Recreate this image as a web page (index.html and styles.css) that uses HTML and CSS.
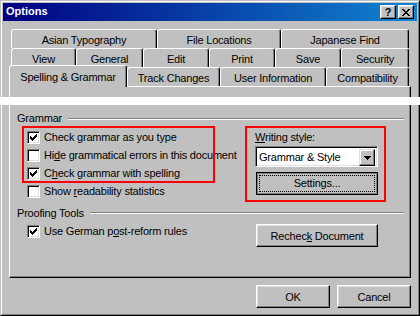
FILE: index.html
```html
<!DOCTYPE html>
<html lang="en">
<head>
    <meta charset="UTF-8">
    <title>Options</title>
    <link rel="stylesheet" href="styles.css">
</head>
<body>
    <div class="window window-top">
        <div class="frame">
            <div class="titlebar">
                <span class="title">Options</span>
                <div class="title-buttons">
                    <span class="tbtn help">?</span>
                    <span class="tbtn close">
                        <svg width="8" height="7" viewBox="0 0 8 7" shape-rendering="crispEdges"><path d="M0 0h2v1H0z M6 0h2v1H6z M1 1h2v1H1z M5 1h2v1H5z M2 2h4v1H2z M3 3h2v1H3z M2 4h4v1H2z M1 5h2v1H1z M5 5h2v1H5z M0 6h2v1H0z M6 6h2v1H6z"/></svg>
                    </span>
                </div>
            </div>

            <div class="tabs">
                <div class="tab-row">
                    <div class="tab tab-asian">Asian Typography</div>
                    <div class="tab tab-files">File Locations</div>
                    <div class="tab tab-find">Japanese Find</div>
                </div>
                <div class="tab-row">
                    <div class="tab tab-view">View</div>
                    <div class="tab tab-general">General</div>
                    <div class="tab tab-edit">Edit</div>
                    <div class="tab tab-print">Print</div>
                    <div class="tab tab-save">Save</div>
                    <div class="tab tab-security">Security</div>
                </div>
                <div class="tab-row front">
                    <div class="tab tab-spelling active">Spelling &amp; Grammar</div>
                    <div class="tab tab-track">Track Changes</div>
                    <div class="tab tab-user">User Information</div>
                    <div class="tab tab-compat">Compatibility</div>
                </div>
            </div>
            <div class="panel panel-top"></div>
        </div>
    </div>

    <div class="window window-bottom">
        <div class="frame">
            <div class="panel panel-bottom">
                <div class="group-head">
                    <span>Grammar</span>
                    <div class="rule"></div>
                </div>

                <div class="grammar">
                    <div class="grammar-left">
                        <div class="mark checks">
                            <div class="check">
                                <span class="box"><svg width="7" height="7" viewBox="0 0 7 7" shape-rendering="crispEdges"><path d="M6 0h1v1H6z M5 1h2v1H5z M0 2h1v1H0z M4 2h3v1H4z M0 3h2v1H0z M3 3h3v1H3z M0 4h5v1H0z M1 5h3v1H1z M2 6h1v1H2z"/></svg></span>
                                <span>Check <u>g</u>rammar as you type</span>
                            </div>
                            <div class="check">
                                <span class="box"></span>
                                <span>Hi<u>d</u>e grammatical errors in this document</span>
                            </div>
                            <div class="check">
                                <span class="box"><svg width="7" height="7" viewBox="0 0 7 7" shape-rendering="crispEdges"><path d="M6 0h1v1H6z M5 1h2v1H5z M0 2h1v1H0z M4 2h3v1H4z M0 3h2v1H0z M3 3h3v1H3z M0 4h5v1H0z M1 5h3v1H1z M2 6h1v1H2z"/></svg></span>
                                <span>C<u>h</u>eck grammar with spelling</span>
                            </div>
                        </div>
                        <div class="check single">
                            <span class="box"></span>
                            <span>Show <u>r</u>eadability statistics</span>
                        </div>
                    </div>

                    <div class="mark grammar-right">
                        <div class="field-label"><u>W</u>riting style:</div>
                        <div class="combo">
                            <span class="combo-text">Grammar &amp; Style</span>
                            <span class="combo-btn">
                                <svg width="7" height="4" viewBox="0 0 7 4" shape-rendering="crispEdges"><path d="M0 0h7v1H0z M1 1h5v1H1z M2 2h3v1H2z M3 3h1v1H3z"/></svg>
                            </span>
                        </div>
                        <button class="btn btn-default settings"><span class="focus">Settings...</span></button>
                    </div>
                </div>

                <div class="group-head proofing-head">
                    <span>Proofing Tools</span>
                    <div class="rule"></div>
                </div>

                <div class="proofing">
                    <div class="proofing-left">
                        <div class="check single">
                            <span class="box"><svg width="7" height="7" viewBox="0 0 7 7" shape-rendering="crispEdges"><path d="M6 0h1v1H6z M5 1h2v1H5z M0 2h1v1H0z M4 2h3v1H4z M0 3h2v1H0z M3 3h3v1H3z M0 4h5v1H0z M1 5h3v1H1z M2 6h1v1H2z"/></svg></span>
                            <span>Use German p<u>o</u>st-reform rules</span>
                        </div>
                    </div>
                    <button class="btn recheck">Rechec<u>k</u> Document</button>
                </div>
            </div>

            <div class="actions">
                <button class="btn">OK</button>
                <button class="btn">Cancel</button>
            </div>
        </div>
    </div>
</body>
</html>
```

FILE: styles.css
```css
body {
    margin: 0;
    background: #fff;
    font-family: "Liberation Sans", Arial, sans-serif;
    font-size: 11px;
    letter-spacing: -0.2px;
    color: #000;
}

u {
    text-underline-offset: 1px;
    text-decoration-thickness: 1px;
}

/* window frame, cut in two parts */
.window {
    width: 420px;
    box-sizing: border-box;
    background: #c0c0c0;
    border: 1px solid;
    border-color: #c0c0c0 #000 #000 #c0c0c0;
}
.window-top {
    height: 97px;
    border-bottom: none;
}
.window-bottom {
    height: 211px;
    margin-top: 8px;
    border-top: none;
}
.frame {
    height: 100%;
    box-sizing: border-box;
    border: 1px solid;
    border-color: #fff #808080 #808080 #fff;
    padding: 1px;
}
.window-top .frame {
    border-bottom: none;
    padding-bottom: 0;
}
.window-bottom .frame {
    border-top: none;
    padding-top: 0;
}

/* title bar */
.titlebar {
    height: 18px;
    display: flex;
    justify-content: space-between;
    padding: 0 3px 0 3px;
    background: linear-gradient(to right, #000080, #1084d0);
}
.title {
    color: #fff;
    font-weight: bold;
    letter-spacing: 0;
    line-height: 13px;
    padding-top: 2px;
}
.title-buttons {
    display: flex;
    gap: 2px;
    padding-top: 2px;
}
.tbtn {
    width: 16px;
    height: 14px;
    box-sizing: border-box;
    display: flex;
    align-items: center;
    justify-content: center;
    background: #c0c0c0;
    border: 1px solid;
    border-color: #fff #000 #000 #fff;
    box-shadow: inset -1px -1px #808080, inset 1px 1px #dfdfdf;
}
.help {
    font-weight: bold;
    line-height: 12px;
}
.tbtn svg {
    display: block;
}

/* tabs */
.tabs {
    margin-top: 8px;
    padding-left: 8px;
}
.tab-row {
    display: flex;
    height: 19px;
    align-items: flex-start;
}
.tab-row.front {
    margin-left: -2px;
}
.tab {
    box-sizing: border-box;
    height: 19px;
    background: #c0c0c0;
    border: 1px solid;
    border-bottom: none;
    border-color: #fff #000 transparent #fff;
    border-radius: 3px 3px 0 0;
    box-shadow: inset -1px 0 #808080;
    text-align: center;
    padding-top: 4px;
    line-height: 13px;
    white-space: nowrap;
}
.tab.active {
    height: 22px;
    margin-top: -2px;
    padding-top: 5px;
    position: relative;
    z-index: 1;
}
.tab-asian { width: 146px; }
.tab-files { width: 124px; }
.tab-find { width: 128px; }
.tab-view { width: 65px; }
.tab-general { width: 67px; }
.tab-edit { width: 66px; }
.tab-print { width: 66px; }
.tab-save { width: 66px; }
.tab-security { width: 68px; }
.tab-spelling { width: 118px; }
.tab-track { width: 93px; }
.tab-user { width: 106px; }
.tab-compat { width: 83px; }

/* tab page */
.panel {
    box-sizing: border-box;
    width: 402px;
    margin-left: 6px;
    border-left: 1px solid #fff;
    border-right: 1px solid #000;
}
.panel-top {
    height: 11px;
    border-top: 1px solid #fff;
    box-shadow: inset -1px 0 #808080;
}
.panel-bottom {
    height: 173px;
    border-bottom: 1px solid #000;
    box-shadow: inset -1px -1px #808080;
    padding: 7px 6px 0 7px;
}

.group-head {
    display: flex;
    height: 13px;
    line-height: 13px;
    white-space: nowrap;
}
.rule {
    flex: 1;
    height: 0;
    margin: 6px 0 0 6px;
    border-top: 1px solid #808080;
    border-bottom: 1px solid #fff;
}
.proofing-head {
    margin-top: 7px;
}
.proofing-head .rule {
    margin-top: 5px;
}

.grammar {
    display: flex;
    margin-top: 3px;
}
.grammar-left {
    width: 230px;
}
.mark {
    outline: 2px solid #f00;
    box-sizing: border-box;
}
.checks {
    width: 189px;
    height: 53px;
    margin-left: 7px;
}

.check {
    display: flex;
    align-items: flex-start;
    height: 18px;
    line-height: 18px;
    padding-left: 3px;
    white-space: nowrap;
}
.checks .check:last-child {
    height: 17px;
}
.check.single {
    margin-left: 7px;
    margin-top: 1px;
}
.box {
    flex-shrink: 0;
    width: 13px;
    height: 13px;
    box-sizing: border-box;
    margin: 3px 4px 0 0;
    padding: 2px;
    background: #fff;
    border: 1px solid;
    border-color: #808080 #fff #fff #808080;
    box-shadow: inset 1px 1px #000, inset -1px -1px #dfdfdf;
}
.box svg {
    display: block;
}

.grammar-right {
    flex-shrink: 0;
    width: 137px;
    height: 72px;
    padding-left: 8px;
}
.field-label {
    margin-top: 3px;
    line-height: 13px;
}
.combo {
    display: flex;
    justify-content: space-between;
    width: 123px;
    height: 21px;
    margin-top: 2px;
    box-sizing: border-box;
    padding: 2px;
    background: #fff;
    border: 1px solid;
    border-color: #808080 #fff #fff #808080;
    box-shadow: inset 1px 1px #000, inset -1px -1px #dfdfdf;
}
.combo-text {
    line-height: 17px;
    padding-left: 1px;
}
.combo-btn {
    flex-shrink: 0;
    width: 16px;
    height: 17px;
    box-sizing: border-box;
    display: flex;
    align-items: center;
    justify-content: center;
    background: #c0c0c0;
    border: 1px solid;
    border-color: #dfdfdf #000 #000 #dfdfdf;
    box-shadow: inset -1px -1px #808080, inset 1px 1px #fff;
}

/* push buttons */
.btn {
    flex-shrink: 0;
    box-sizing: border-box;
    height: 23px;
    padding: 0;
    font: inherit;
    letter-spacing: inherit;
    color: #000;
    line-height: 20px;
    text-align: center;
    background: #c0c0c0;
    border: 1px solid;
    border-color: #fff #000 #000 #fff;
    box-shadow: inset -1px -1px #808080, inset 1px 1px #dfdfdf;
}
.settings {
    display: flex;
    width: 122px;
    margin: 5px 0 0 1px;
    padding: 2px;
    border-color: #000;
    box-shadow: inset 1px 1px #808080, inset -1px -1px #808080;
}
.focus {
    flex: 1;
    border: 1px dotted #000;
    line-height: 15px;
}

.proofing {
    display: flex;
    align-items: flex-start;
}
.proofing-left {
    width: 239px;
}
.proofing-left .check {
    margin-top: 2px;
}
.recheck {
    width: 122px;
    margin-top: 4px;
}

.actions {
    display: flex;
    justify-content: flex-end;
    gap: 7px;
    margin-top: 7px;
    padding-right: 6px;
}
.actions .btn {
    width: 74px;
}
```
